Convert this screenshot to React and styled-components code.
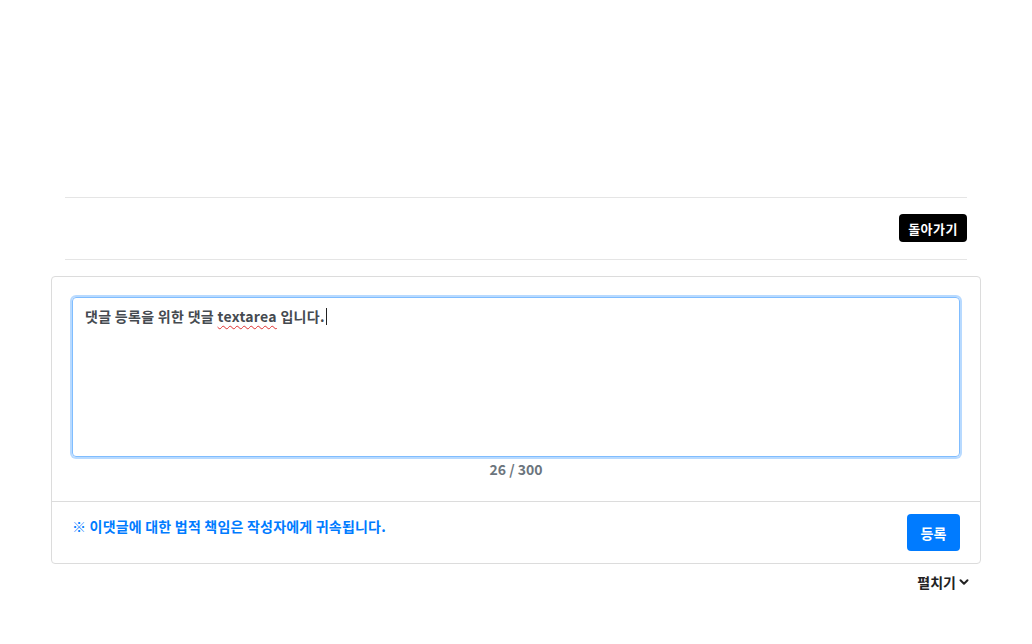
import styled, { createGlobalStyle } from "styled-components"

const GlobalStyle = createGlobalStyle`
	body {
		margin: 0;
		background: #fff;
		font-family: "Noto Sans CJK KR", "Noto Sans", sans-serif;
		color: #212529;
	}
`

const Page = styled.div`
	width: 930px;
	margin: 0 auto;
	padding-top: 197px;
`

const ActionBar = styled.div`
	margin: 0 14px 0 14px;
	padding: 16px 0 17px;
	border-top: 1px solid #e5e5e5;
	border-bottom: 1px solid #e5e5e5;
	display: flex;
	justify-content: flex-end;
`

const BackButton = styled.button`
	height: 28px;
	padding: 0 9px;
	border: none;
	border-radius: 4px;
	background: #000;
	color: #fff;
	font-family: inherit;
	font-size: 13px;
	font-weight: 700;
	letter-spacing: 0.5px;
	cursor: pointer;
`

const CommentCard = styled.div`
	margin-top: 16px;
	border: 1px solid #dcdcdc;
	border-radius: 4px;
`

const CardBody = styled.div`
	padding: 20px;
	display: flex;
	flex-direction: column;
	align-items: center;
`

const Editor = styled.div`
	box-sizing: border-box;
	width: 100%;
	height: 160px;
	padding: 7px 12px;
	border: 1px solid #80bdff;
	border-radius: 4px;
	box-shadow: 0 0 0 2px rgba(0, 123, 255, 0.28);
	font-size: 14px;
	font-weight: 700;
	line-height: 22px;
	letter-spacing: 0.3px;
	color: #454a50;
`

const Misspelled = styled.span`
	text-decoration: underline wavy #e03030;
	text-decoration-thickness: 1px;
	text-underline-offset: 3px;
`

const Caret = styled.span`
	display: inline-block;
	width: 1px;
	height: 17px;
	margin-left: 1px;
	vertical-align: -3px;
	background: #222;
`

const Counter = styled.div`
	line-height: 24px;
	font-size: 14px;
	font-weight: 700;
	color: #6c757d;
`

const CardFooter = styled.div`
	border-top: 1px solid #dcdcdc;
	padding: 12px 20px;
	display: flex;
	justify-content: space-between;
	align-items: flex-start;
`

const Notice = styled.p`
	margin: 2px 0 0;
	font-size: 14px;
	font-weight: 700;
	letter-spacing: 0.2px;
	color: #007bff;
`

const SubmitButton = styled.button`
	width: 53px;
	height: 37px;
	border: none;
	border-radius: 4px;
	background: #007bff;
	color: #fff;
	font-family: inherit;
	font-size: 14px;
	font-weight: 700;
	cursor: pointer;
`

const ToggleRow = styled.div`
	display: flex;
	justify-content: flex-end;
	padding: 8px 12px 0 0;
`

const ToggleButton = styled.button`
	display: flex;
	align-items: center;
	gap: 3px;
	padding: 0;
	border: none;
	background: none;
	font-family: inherit;
	font-size: 14px;
	font-weight: 700;
	color: #222;
	cursor: pointer;
`

function Chevron() {
	return (
		<svg width="10" height="10" viewBox="0 0 10 10">
			<path d="M1.5 3.2 L5 6.7 L8.5 3.2" fill="none" stroke="#222" strokeWidth="2" strokeLinecap="round" strokeLinejoin="round" />
		</svg>
	)
}

function App() {
	return (
		<>
			<GlobalStyle />
			<Page>
				<ActionBar>
					<BackButton>돌아가기</BackButton>
				</ActionBar>
				<CommentCard>
					<CardBody>
						<Editor role="textbox">
							댓글 등록을 위한 댓글 <Misspelled>textarea</Misspelled> 입니다.<Caret />
						</Editor>
						<Counter>26 / 300</Counter>
					</CardBody>
					<CardFooter>
						<Notice>※ 이댓글에 대한 법적 책임은 작성자에게 귀속됩니다.</Notice>
						<SubmitButton>등록</SubmitButton>
					</CardFooter>
				</CommentCard>
				<ToggleRow>
					<ToggleButton>펼치기 <Chevron /></ToggleButton>
				</ToggleRow>
			</Page>
		</>
	)
}

export default App
